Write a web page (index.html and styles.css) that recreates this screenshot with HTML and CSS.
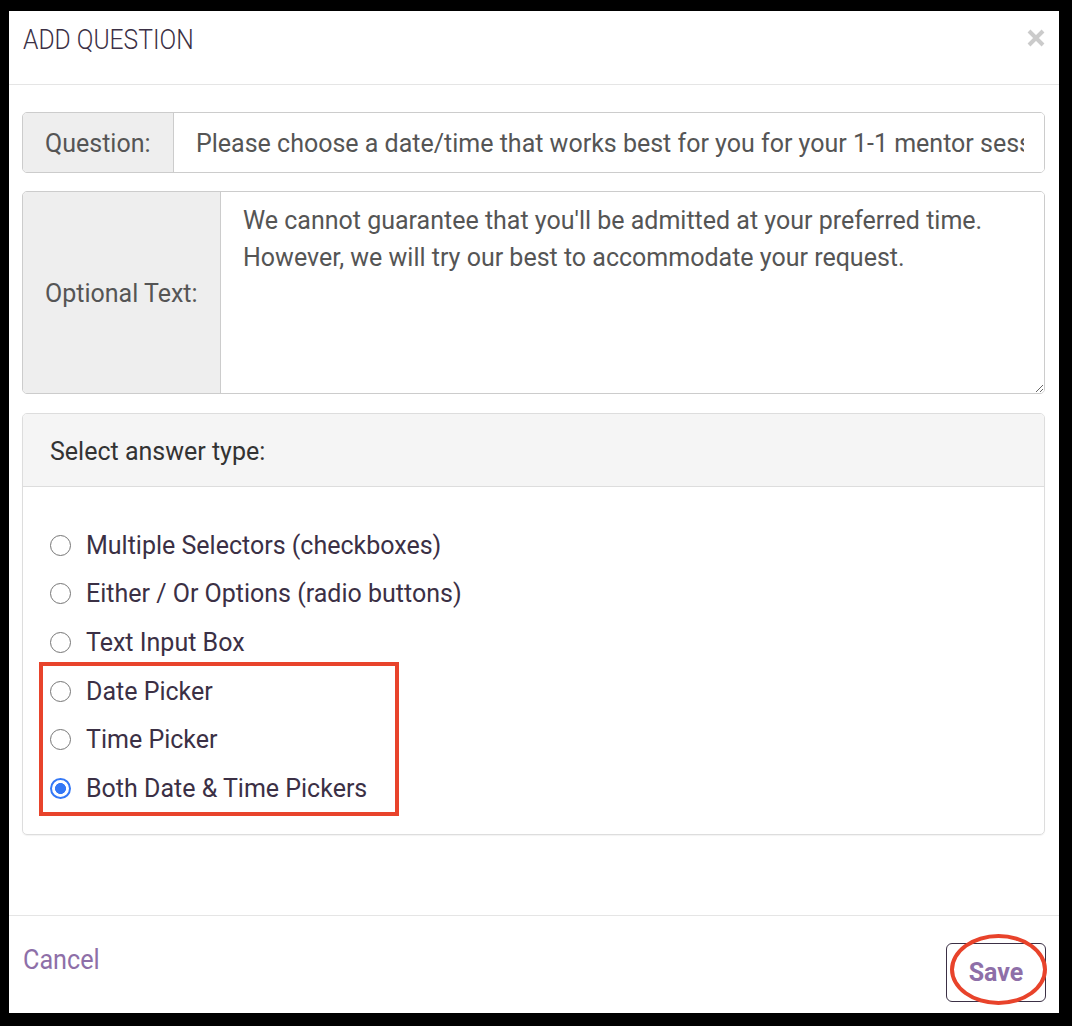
FILE: index.html
```html
<!DOCTYPE html>
<html>
<head>
<meta charset="utf-8">
<link rel="stylesheet" href="styles.css">
</head>
<body>
<div class="modal">
  <div class="modal-header">
    <h4 class="title">ADD QUESTION</h4>
    <span class="close"><svg width="18" height="18" viewBox="0 0 18 18"><path d="M2 2 L16 16 M16 2 L2 16" stroke="#cbcbcb" stroke-width="4" stroke-linecap="butt"/></svg></span>
  </div>
  <div class="modal-body">
    <div class="input-group q-group">
      <span class="addon q-addon">Question:</span>
      <input class="control" type="text" value="Please choose a date/time that works best for you for your 1-1 mentor session">
    </div>
    <div class="input-group t-group">
      <span class="addon t-addon">Optional Text:</span>
      <textarea class="control area">We cannot guarantee that you'll be admitted at your preferred time. However, we will try our best to accommodate your request.</textarea>
    </div>
    <div class="panel">
      <div class="panel-heading">Select answer type:</div>
      <div class="panel-body">
        <label class="opt"><input type="radio" name="t"><span>Multiple Selectors (checkboxes)</span></label>
        <label class="opt"><input type="radio" name="t"><span>Either / Or Options (radio buttons)</span></label>
        <label class="opt"><input type="radio" name="t"><span>Text Input Box</span></label>
        <label class="opt"><input type="radio" name="t"><span>Date Picker</span></label>
        <label class="opt"><input type="radio" name="t"><span>Time Picker</span></label>
        <label class="opt"><input type="radio" name="t" checked><span>Both Date &amp; Time Pickers</span></label>
        <div class="mark-rect"></div>
      </div>
    </div>
  </div>
  <div class="modal-footer">
    <a class="cancel">Cancel</a>
    <button class="save">Save<span class="mark-ellipse"></span></button>
  </div>
</div>
</body>
</html>
```
FILE: styles.css
```css
html, body {
  margin: 0;
  padding: 0;
  background: #000;
}
body {
  width: 1072px;
  height: 1026px;
  overflow: hidden;
  font-family: Roboto, "Liberation Sans", sans-serif;
}
.modal {
  margin: 11px 13px 0 9px;
  width: 1050px;
  height: 1002px;
  background: #fff;
  display: flex;
  flex-direction: column;
}
.modal-header {
  height: 74px;
  box-sizing: border-box;
  border-bottom: 1px solid #e5e5e5;
  display: flex;
  justify-content: space-between;
  align-items: flex-start;
  padding: 15px 14px 0 14px;
}
.title {
  margin: 0;
  font-weight: 300;
  font-size: 28px;
  line-height: 28px;
  color: #3b3045;
  transform: scaleX(0.88);
  transform-origin: left center;
  white-space: nowrap;
}
.close {
  margin-top: 3px;
  display: block;
  line-height: 0;
}
.modal-body {
  flex: 1;
  padding: 27px 14px 0 13px;
}
.input-group {
  display: flex;
  border: 1px solid #cccccc;
  border-radius: 5px;
  overflow: hidden;
  box-sizing: border-box;
}
.q-group {
  height: 61px;
}
.t-group {
  height: 203px;
  margin-top: 18px;
}
.addon {
  background: #eeeeee;
  border-right: 1px solid #cccccc;
  color: #555;
  font-size: 25px;
  display: flex;
  align-items: center;
  padding-left: 22px;
  padding-top: 2px;
  box-sizing: border-box;
  flex: none;
}
.q-addon {
  width: 151px;
}
.t-addon {
  width: 198px;
}
.control {
  flex: 1;
  border: 0;
  outline: none;
  margin: 0;
  font-family: Roboto, "Liberation Sans", sans-serif;
  font-size: 25px;
  color: #555;
  background: #fff;
  padding: 2px 20px 0 22px;
  min-width: 0;
}
.area {
  padding: 10px 22px;
  line-height: 37px;
  resize: vertical;
}
.panel {
  margin-top: 19px;
  border: 1px solid #dddddd;
  border-radius: 5px;
  box-shadow: 0 1px 1px rgba(0,0,0,0.05);
  overflow: hidden;
}
.panel-heading {
  background: #f5f5f5;
  border-bottom: 1px solid #dddddd;
  height: 73px;
  box-sizing: border-box;
  display: flex;
  align-items: center;
  padding-left: 27px;
  padding-top: 2px;
  font-size: 25px;
  color: #333;
}
.panel-body {
  position: relative;
  padding: 34px 0 21px 27px;
}
.opt {
  display: flex;
  align-items: center;
  height: 48.6px;
  font-size: 25px;
  color: #3b3045;
}
.opt input {
  appearance: none;
  -webkit-appearance: none;
  width: 21px;
  height: 21px;
  margin: 0 15px 0 0;
  border: 1.5px solid #767676;
  border-radius: 50%;
  box-sizing: border-box;
  background: #fff;
  flex: none;
}
.opt input:checked {
  border: 2px solid #3478f6;
  background: radial-gradient(circle, #3478f6 0, #3478f6 5.2px, #fff 5.8px);
}
.mark-rect {
  position: absolute;
  left: 16px;
  top: 175px;
  width: 360px;
  height: 154px;
  box-sizing: border-box;
  border: 4px solid #e8432b;
  pointer-events: none;
}
.modal-footer {
  height: 98px;
  box-sizing: border-box;
  border-top: 1px solid #e5e5e5;
  display: flex;
  justify-content: space-between;
  align-items: flex-start;
  padding: 27px 13px 0 14px;
}
.cancel {
  display: block;
  margin-top: 3px;
  font-size: 28px;
  line-height: 28px;
  color: #8e6fa8;
  transform: scaleX(0.9);
  transform-origin: left center;
}
.save {
  position: relative;
  width: 100px;
  height: 59px;
  background: #fff;
  border: 1px solid #3b3045;
  border-radius: 6px;
  font-family: Roboto, "Liberation Sans", sans-serif;
  font-weight: 700;
  font-size: 25px;
  color: #8e6fa8;
  padding: 0;
}
.mark-ellipse {
  position: absolute;
  left: 3px;
  top: -10px;
  width: 97px;
  height: 71px;
  box-sizing: border-box;
  border: 4px solid #e8432b;
  border-radius: 50%;
}
```
